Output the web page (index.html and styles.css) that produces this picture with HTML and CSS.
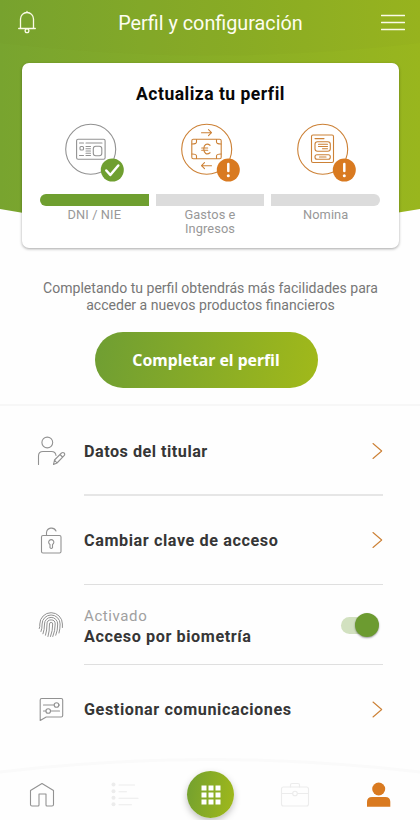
FILE: index.html
```html
<!DOCTYPE html>
<html lang="es">
<head>
<meta charset="utf-8">
<title>Perfil y configuración</title>
<link rel="stylesheet" href="styles.css">
</head>
<body>
<div class="app">
  <section class="hero">
    <svg class="hero-bg" viewBox="0 0 420 240" width="420" height="240">
      <defs><linearGradient id="g"><stop offset="0" stop-color="#78a42f"/><stop offset="1" stop-color="#99b61e"/></linearGradient></defs>
      <path d="M0 0H420V209Q210 247 0 209Z" fill="url(#g)"/>
      <path d="M0 0H420V43Q210 68 0 43Z" fill="#6f8f20" opacity=".06"/>
    </svg>
    <header class="topbar">
      <svg width="18" height="24" viewBox="0 0 18 24" class="line white"><path d="M2.500 18.500V9a6.500 6.500 0 0 1 13 0v9.500M.7 18.500h16.600M9 2.500V1.500"/><circle cx="9" cy="20.700" r="1.900"/></svg>
      <h1>Perfil y configuración</h1>
      <svg width="24" height="17" viewBox="0 0 24 17" class="line white"><path d="M.5 1.500h23M.5 8.500h23M.5 15.500h23"/></svg>
    </header>
    <div class="card">
      <h2>Actualiza tu perfil</h2>
      <div class="steps">
        <div class="step">
          <svg width="62" height="60" viewBox="0 0 62 60" class="line gray"><circle cx="26.700" cy="26.300" r="25"/><rect x="12.600" y="16.300" width="28.500" height="20" rx="1.500"/><path d="M15.500 20h4M22 20h16M22 23.500h4.500M22 25.700h4.500M22 28h4.500M22 30.300h4.500M22 32.500h4.500M15.500 32.500h4"/><rect x="16" y="23.500" width="3.500" height="3.500" rx="1"/><rect x="29.300" y="23.300" width="8.500" height="9.500" rx="2.500"/><circle cx="48.300" cy="47" r="11.500" class="ok"/><path d="M42.300 47.500l4 4.500 8-9.500" class="mark"/></svg>
          <div class="bar first"></div><p>DNI / NIE</p>
        </div>
        <div class="step">
          <svg width="62" height="60" viewBox="0 0 62 60" class="line orange"><circle cx="26.700" cy="26.300" r="25"/><rect x="11.800" y="16.300" width="29.400" height="19.500" rx="1.500"/><path d="M16.500 16.500v2.500q0 2-4.500 2M36.500 16.500v2.500q0 2 4.500 2M16.500 35.500v-2.500q0-2-4.500-2M36.500 35.500v-2.500q0-2 4.500-2M21.500 9.700h10m-3-3 3 3-3 3M31.500 42.700h-10m3-3-3 3 3 3"/><path d="M30 22.300c-3.200-2.500-6.200-.7-6.200 3.700s3 6.200 6.200 3.700M21.700 25h6M21.700 27.300h6"/><circle cx="48.300" cy="47" r="11.500" class="warn"/><path d="M48.300 41v7" class="mark"/><circle cx="48.300" cy="52.700" r="1.500" class="dot"/></svg>
          <div class="bar"></div><p>Gastos e<br>Ingresos</p>
        </div>
        <div class="step">
          <svg width="62" height="60" viewBox="0 0 62 60" class="line orange"><circle cx="26.700" cy="26.300" r="25"/><rect x="15.500" y="12" width="22" height="27.500" rx="1.500"/><path d="M19 15.600h9M22.500 21.300h9M22.500 23.500h9M26.500 25.700h5"/><rect x="19" y="18.800" width="15.300" height="9.500" rx="2.500"/><rect x="19" y="31.800" width="15.300" height="4.500" rx="2"/><path d="M23.500 34h6.500"/><circle cx="48.300" cy="47" r="11.500" class="warn"/><path d="M48.300 41v7" class="mark"/><circle cx="48.300" cy="52.700" r="1.500" class="dot"/></svg>
          <div class="bar last"></div><p>Nomina</p>
        </div>
      </div>
    </div>
    <p class="hint">Completando tu perfil obtendrás más facilidades para<br>acceder a nuevos productos financieros</p>
    <button class="cta">Completar el perfil</button>
  </section>
  <ul class="menu">
    <li class="item">
      <svg width="30" height="32" viewBox="0 0 30 32" class="line gray"><circle cx="11.300" cy="7.500" r="5.400"/><path d="M2.500 29.500v-8.500q0-4.500 4.500-4.500h8.500q4 0 4.500 4M17.500 29.500l1-4.500 7-7q1.400-1 2.600 0t0 2.700L21 28zM18.500 25l2.500 3M24 19.500l2.500 2.500"/></svg>
      <div class="text"><b>Datos del titular</b></div>
      <svg width="12" height="18" viewBox="0 0 12 18" class="line orange"><path d="M2 1.500l8.700 7.500-8.700 7.500"/></svg>
    </li>
    <li class="item">
      <svg width="30" height="32" viewBox="0 0 30 32" class="line gray"><rect x="5.500" y="10.500" width="19.500" height="17.500" rx="1.500"/><path d="M10.500 10.500V7.500a5 5 0 0 1 9.500-1.500"/><path d="M14 19.500a2.600 2.600 0 1 1 2.500 0v3.200q-1.200 1.500-2.500 0z"/></svg>
      <div class="text"><b>Cambiar clave de acceso</b></div>
      <svg width="12" height="18" viewBox="0 0 12 18" class="line orange"><path d="M2 .5l8.700 7.500-8.700 7.500"/></svg>
    </li>
    <li class="item short">
      <svg width="30" height="32" viewBox="0 0 30 32" class="line gray finger"><path d="M3.300 19.500q.8-2 .5-4.500a11.300 11.300 0 0 1 22.600 0v3.500M5 22.500q1.200-3 1.100-7.500a9 9 0 0 1 18 0q0 5-1.100 9M7 24.800q1.500-4 1.500-9.800a6.600 6.600 0 0 1 13.200 0q0 6.500-1.900 11.200M9.500 26.200q1.500-5 1.500-11.200a4.100 4.100 0 0 1 8.200 0q0 7-2.400 12.500M12 27.500q1.500-5 1.500-12.500a1.600 1.600 0 0 1 3.200 0q0 7-2.200 12.500"/></svg>
      <div class="text"><span>Activado</span><b>Acceso por biometría</b></div>
      <div class="switch"><i></i></div>
    </li>
    <li class="item">
      <svg width="30" height="32" viewBox="0 0 30 32" class="line gray"><path d="M4.200 26.500V6q0-1.500 1.500-1.500h19.500q1.500 0 1.500 1.500v15.500q0 1.500-1.500 1.500H10.200zM7.500 11h10.500M22.500 11h1M7.500 17h2.500M14.500 17h9"/><circle cx="20.500" cy="11" r="2.300"/><circle cx="12.200" cy="17" r="2.300"/></svg>
      <div class="text"><b>Gestionar comunicaciones</b></div>
      <svg width="12" height="18" viewBox="0 0 12 18" class="line orange"><path d="M2 1l8.700 7.500-8.700 7.500"/></svg>
    </li>
  </ul>
  <nav class="tabs">
    <svg class="tabs-bg" width="420" height="66" viewBox="0 0 420 66"><path d="M0 18Q210-7 420 18" fill="none" stroke="#fafafa" stroke-width="3"/></svg>
    <svg width="26" height="26" viewBox="0 0 26 26" class="line gray"><path d="M1.500 8.500 13 1.500l11.500 7V22.500q0 1.500-1.500 1.500h-5q-1 0-1-1V12H10v11q0 1-1 1H3q-1.500 0-1.500-1.500z"/></svg>
    <svg width="28" height="26" viewBox="0 0 28 26" class="line pale list"><g class="dots"><circle cx="2.500" cy="2.500" r="2"/><circle cx="2.500" cy="9.200" r="2"/><circle cx="2.500" cy="15.800" r="2"/><circle cx="2.500" cy="22.300" r="2"/></g><path d="M8 3h15.500M8 9.700h7.500M8 16.300h19M8 22.800h12.500"/></svg>
    <div class="fab"><svg width="20" height="20" viewBox="0 0 20 20" fill="#fff"><path d="M.5.500h5v5h-5zM7.500.500h5v5h-5zM14.500.500h5v5h-5zM.5 7.500h5v5h-5zM7.500 7.500h5v5h-5zM14.500 7.500h5v5h-5zM.5 14.500h5v5h-5zM7.500 14.500h5v5h-5zM14.500 14.500h5v5h-5z"/></svg></div>
    <svg width="30" height="26" viewBox="0 0 30 26" class="line pale case"><rect x="1.500" y="5" width="27" height="19" rx="2"/><path d="M10.500 5V3q0-1.500 1.500-1.500h6q1.500 0 1.500 1.500v2M1.500 11.500h11M17.500 11.500h11"/><circle cx="15" cy="11.500" r="2.300"/></svg>
    <svg width="24" height="26" viewBox="0 0 24 26" fill="#d97a20"><circle cx="11.700" cy="7" r="6.500"/><path d="M0 24.700V20q0-5 5-5h13.300q5 0 5 5v4.700z"/></svg>
  </nav>
</div>
</body>
</html>
```
FILE: styles.css
```css
* { box-sizing: border-box; }
body { margin: 0; background: #fefefe; font-family: Roboto, "Liberation Sans", sans-serif; }
h1, h2, p, ul { margin: 0; padding: 0; }
.app { width: 420px; height: 820px; display: flex; flex-direction: column; overflow: hidden; }
.line { fill: none; stroke-width: 1.1; stroke-linecap: round; stroke-linejoin: round; }
.gray { stroke: #929292; }
.orange { stroke: #cc8136; }
.white { stroke: #fbfbe8; stroke-width: 1.3; }
.pale { stroke: #ececec; }
.dots { fill: #ececec; stroke: none; }
.ok { fill: #6f9f30; stroke: none; }
.warn { fill: #d97a20; stroke: none; }
.mark { stroke: #fff; stroke-width: 2.5; }
.dot { fill: #fff; stroke: none; }

.hero { position: relative; height: 406px; display: flex; flex-direction: column; align-items: center; border-bottom: 2px solid #f7f7f7; }
.hero-bg { position: absolute; top: 0; left: 0; z-index: -1; }
.topbar { width: 100%; height: 63px; padding: 10px 15px 0 18px; display: flex; justify-content: space-between; align-items: flex-start; }
.topbar svg:last-child { margin-top: 4px; }
h1 { font-size: 19.800px; font-weight: 400; line-height: 28px; color: #fdfdf0; margin-left: 4px; white-space: nowrap; }
.card { width: 377px; height: 185px; margin-left: 1px; padding: 20px 19px 0 18px; background: #fff; border-radius: 7px; box-shadow: 0 1px 3px rgba(0,0,0,.35); }
h2 { padding-left: 1px; text-align: center; font-size: 17.500px; line-height: 22px; font-weight: 700; color: #080808; letter-spacing: .5px; }
.steps { display: grid; grid-template-columns: repeat(3, 1fr); gap: 7px; margin-top: 18px; }
.step { display: flex; flex-direction: column; align-items: center; }
.step svg { margin-left: 2px; }
.bar { width: 100%; height: 12px; margin-top: 10.500px; background: #dcdcdc; }
.bar.first { background: #6f9f30; border-radius: 6px 0 0 6px; }
.bar.last { border-radius: 0 6px 6px 0; }
.step p { margin-top: 2px; font-size: 12.800px; line-height: 14.600px; letter-spacing: .1px; color: #989898; text-align: center; }
.hint { margin-top: 32px; padding-left: 1px; font-size: 14.050px; line-height: 16.500px; text-align: center; color: #777; white-space: nowrap; }
.cta { width: 223px; height: 56px; margin-top: 19px; margin-right: 8px; padding: 0; border: 0; border-radius: 28px; background: linear-gradient(100deg, #6f9e33, #a1b91a); color: #fff; font: 700 15.800px "Noto Sans", sans-serif; white-space: nowrap; }

.menu { list-style: none; }
.item { height: 89px; display: flex; align-items: center; padding: 0 37px 0 36px; }
.item:first-child { height: 90px; }
.item.short { height: 80px; }
.text { flex: 1; height: 100%; margin-left: 18px; margin-right: -12px; padding-top: 2px; display: flex; flex-direction: column; justify-content: center; border-bottom: 1px solid #dfdfdf; }
.short .text { margin-right: -42px; }
.item:last-child .text { border: 0; padding-top: 1px; }
.item:first-child .text { padding-top: 4px; border-bottom: 2px solid #e6e6e6; }
.text b { font-size: 16.200px; line-height: 20px; font-weight: 700; color: #363636; letter-spacing: .58px; white-space: nowrap; }
.item:first-child b { letter-spacing: .5px; }
.text span { font-size: 15px; line-height: 22px; color: #a0a0a0; letter-spacing: .6px; }
.finger { stroke-width: 1; }
.switch { width: 37px; height: 17px; margin-right: 5px; border-radius: 9px; background: #d2e1c0; display: flex; justify-content: flex-end; align-items: center; }
.switch i { width: 24px; height: 24px; flex: none; margin-right: -1px; border-radius: 50%; background: #6c9b30; box-shadow: 0 1px 2px rgba(0,0,0,.4); }

.tabs { position: relative; height: 66px; margin-top: auto; padding: 15px 29px 0 29px; display: flex; justify-content: space-between; align-items: center; }
.tabs-bg { position: absolute; left: 0; top: 0; }
.list { margin-left: 9px; }
.case { margin-right: 10px; }
.fab { width: 47px; height: 47px; margin: 0 -1px 0 1px; border-radius: 50%; background: linear-gradient(100deg, #72a030, #a1b91a); display: flex; align-items: center; justify-content: center; box-shadow: 0 3px 7px rgba(0,0,0,.25); }
```
